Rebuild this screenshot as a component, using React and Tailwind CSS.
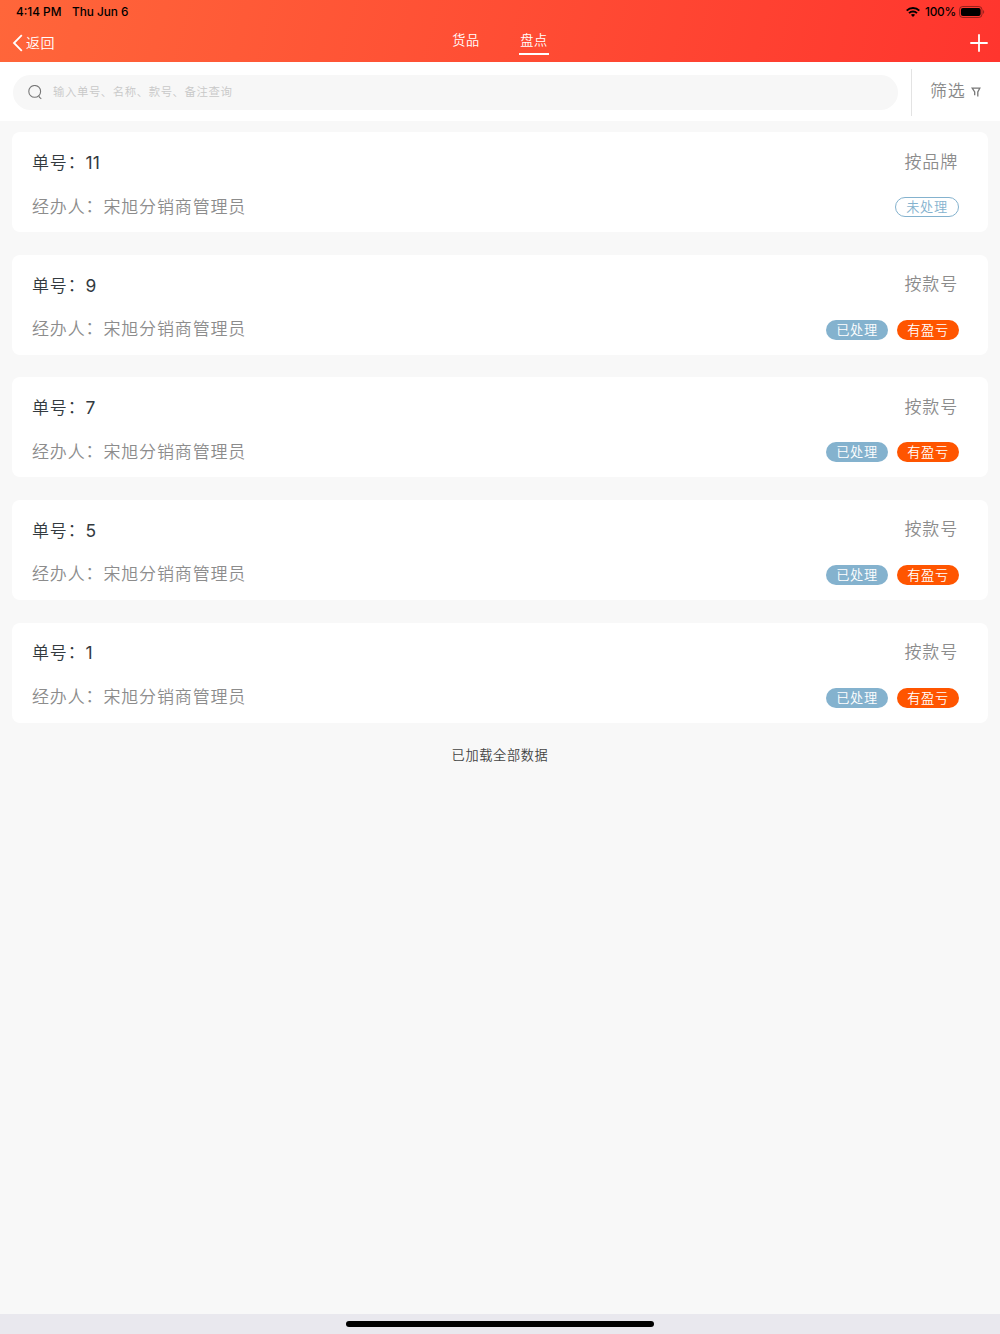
const orders = [
  { id: 11, type: '按品牌', handled: false },
  { id: 9, type: '按款号', handled: true },
  { id: 7, type: '按款号', handled: true },
  { id: 5, type: '按款号', handled: true },
  { id: 1, type: '按款号', handled: true },
];

// ▸ STATUS BAR
function StatusBar() {
  return (
    <div className="flex h-6 items-center justify-between pl-4 pr-[15px] text-[11.8px] leading-6 font-medium text-black">
      <div className="flex gap-[10.5px]">
        <span>4:14 PM</span>
        <span>Thu Jun 6</span>
      </div>
      <div className="flex items-center">
        <svg className="mr-[5px] h-[10px] w-[14px]" viewBox="0 0 14 10" fill="none" stroke="currentColor" strokeWidth="1.9">
          <path d="M0.7 3.7C4.2 0.1 9.8 0.1 13.3 3.7" />
          <path d="M3 6.1C5.2 3.9 8.8 3.9 11 6.1" />
          <path d="M7 9.9L4.9 7.8C6.1 6.7 7.9 6.7 9.1 7.8Z" fill="currentColor" stroke="none" />
        </svg>
        <span className="mr-[3px] tracking-[-0.2px]">100%</span>
        <svg className="h-3 w-[26px]" viewBox="0 0 26 12">
          <rect x="0.5" y="0.5" width="22.5" height="11" rx="3.2" fill="none" stroke="#000" strokeOpacity="0.4" />
          <rect x="1.9" y="1.9" width="19.7" height="8.2" rx="2" fill="#000" />
          <path d="M24.2 4.1C25.5 4.6 25.5 7.4 24.2 7.9Z" fill="#000" fillOpacity="0.45" />
        </svg>
      </div>
    </div>
  );
}

// ▸ NAVIGATION
function NavBar() {
  return (
    <div className="grid h-[38px] grid-cols-3 text-white">
      <button className="flex h-[38px] items-center pl-3">
        <svg className="mr-[3px] h-[18px] w-[11px]" viewBox="0 0 11 18" fill="none" stroke="currentColor" strokeWidth="1.8">
          <path d="M9.8 1.2L2 9L9.8 16.8" />
        </svg>
        <span className="pb-px text-[14px] font-[350] tracking-[0.5px]">返回</span>
      </button>
      <div className="flex justify-center gap-[38px] font-[350]">
        <button className="h-[31px] w-[30px] border-b-2 border-transparent pt-[3px] text-[13.2px] leading-[26px] tracking-[0.6px]">货品</button>
        <button className="h-[31px] w-[30px] border-b-2 border-white pt-[3px] text-[13.2px] leading-[26px] tracking-[0.6px]">盘点</button>
      </div>
      <button className="flex h-[38px] items-center justify-end pr-3">
        <svg className="h-[18px] w-[18px]" viewBox="0 0 18 18" fill="none" stroke="currentColor" strokeWidth="1.8">
          <path d="M9 0.3V17.7M0.3 9H17.7" />
        </svg>
      </button>
    </div>
  );
}

// ▸ SEARCH + FILTER
function SearchBar() {
  return (
    <div className="flex h-[59px] items-center bg-white pt-px pl-[13px]">
      <div className="flex h-[35px] w-[885px] items-center rounded-full bg-[#f7f7f7] pl-[15px]">
        <svg className="mr-[10px] h-[15px] w-[15px] text-[#777]" viewBox="0 0 15 15" fill="none" stroke="currentColor" strokeWidth="1.1">
          <circle cx="6.7" cy="6.4" r="5.9" />
          <path d="M10.9 10.6C10.7 12 11.6 12.8 13.3 13.8" />
        </svg>
        <span className="pt-px text-[11.4px] font-[350] tracking-[0.57px] text-[#c8c8c8]">输入单号、名称、款号、备注查询</span>
      </div>
      <div className="ml-[13px] flex h-[47px] flex-1 items-center border-l border-[#e3e3e3] pl-[18px] text-[#888]">
        <span className="mr-[6px] text-[17px] font-[350] tracking-[0.7px]">筛选</span>
        <svg className="h-[10px] w-[10px] text-[#777]" viewBox="0 0 10 10" fill="none" stroke="currentColor" strokeWidth="1.3">
          <path d="M3.7 8.2V5L1.2 1.2H8.8L6.8 5V9.4" />
        </svg>
      </div>
    </div>
  );
}

function Colon() {
  return <span className="align-[1px] leading-none">：</span>;
}

function OrderCard({ order }) {
  return (
    <div className="flex h-[100px] flex-col rounded-lg bg-white pt-[18px] pl-5 pr-[29px]">
      <div className="flex h-[26px] items-center justify-between text-[17px] tracking-[0.85px]">
        <span className="text-[#333a40]">
          <span className="font-[350]">单号<Colon /></span>
          <span className="text-[17.4px] tracking-normal">{order.id}</span>
        </span>
        <span className="pr-px pb-[2px] font-[350] text-[#8c8c8c]">{order.type}</span>
      </div>
      <div className="mt-[18px] flex h-[26px] items-center justify-between text-[17px] tracking-[0.85px]">
        <span className="font-[350] text-[#8c8c8c]">经办人<Colon />宋旭分销商管理员</span>
        <div className="flex gap-[9px] text-[13.2px] leading-[18px] font-[350] tracking-[0.6px]">
          {order.handled ? (
            <>
              <span className="flex h-5 w-[62px] items-center justify-center rounded-full bg-[#84b2ce] text-white">已处理</span>
              <span className="flex h-5 w-[62px] items-center justify-center rounded-full bg-[#ff5500] text-white">有盈亏</span>
            </>
          ) : (
            <span className="flex h-5 w-16 items-center justify-center rounded-full border border-[#84b2ce] text-[#84b2ce]">未处理</span>
          )}
        </div>
      </div>
    </div>
  );
}

export default function App() {
  return (
    <div className="flex h-[1334px] w-[1000px] flex-col overflow-hidden bg-[#f8f8f8] font-[Inter,'Noto_Sans_CJK_SC',sans-serif]">
      <header className="h-[62px] bg-[linear-gradient(105deg,#ff663a,#ff352e)]">
        <StatusBar />
        <NavBar />
      </header>
      <SearchBar />
      <main className="flex flex-1 flex-col gap-[22.6px] px-3 pt-[11.3px]">
        {orders.map((order) => (
          <OrderCard key={order.id} order={order} />
        ))}
        <p className="text-center text-[13.2px] leading-5 font-[350] tracking-[0.65px] text-[#444]">已加载全部数据</p>
      </main>
      {/* Home indicator */}
      <footer className="flex h-5 justify-center bg-[#e9e8ee] pt-[7px]">
        <div className="h-[6px] w-[308px] rounded-full bg-black" />
      </footer>
    </div>
  );
}
